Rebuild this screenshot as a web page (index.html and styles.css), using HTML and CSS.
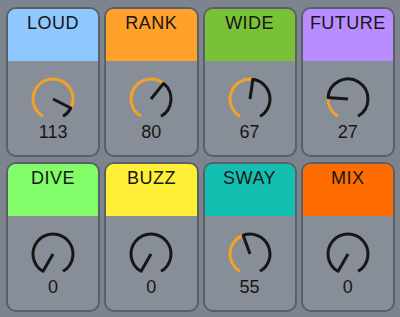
FILE: index.html
```html
<!DOCTYPE html>
<html>
<head>
<meta charset="utf-8">
<link rel="stylesheet" href="styles.css">
</head>
<body>
<div class="grid">
  <div class="card">
    <div class="head loud">LOUD</div>
    <div class="body">
      <svg class="knob" viewBox="0 0 46 46" width="46" height="46">
        <path class="on" d="M13 40.32 A20 20 0 1 1 40.84 32.05"/>
        <path class="off" d="M40.84 32.05 A20 20 0 0 1 33 40.32"/>
        <line class="ptr" x1="23" y1="23" x2="41.73" y2="32.5"/>
      </svg>
      <div class="val">113</div>
    </div>
  </div>
  <div class="card">
    <div class="head rank">RANK</div>
    <div class="body">
      <svg class="knob" viewBox="0 0 46 46" width="46" height="46">
        <path class="on" d="M13 40.32 A20 20 0 1 1 35.58 7.45"/>
        <path class="off" d="M35.58 7.45 A20 20 0 0 1 33 40.32"/>
        <line class="ptr" x1="23" y1="23" x2="36.21" y2="6.67"/>
      </svg>
      <div class="val">80</div>
    </div>
  </div>
  <div class="card">
    <div class="head wide">WIDE</div>
    <div class="body">
      <svg class="knob" viewBox="0 0 46 46" width="46" height="46">
        <path class="on" d="M13 40.32 A20 20 0 0 1 25.88 3.21"/>
        <path class="off" d="M25.88 3.21 A20 20 0 0 1 33 40.32"/>
        <line class="ptr" x1="23" y1="23" x2="26.02" y2="2.22"/>
      </svg>
      <div class="val">67</div>
    </div>
  </div>
  <div class="card">
    <div class="head future">FUTURE</div>
    <div class="body">
      <svg class="knob" viewBox="0 0 46 46" width="46" height="46">
        <path class="on" d="M13 40.32 A20 20 0 0 1 3.04 21.68"/>
        <path class="off" d="M3.04 21.68 A20 20 0 1 1 33 40.32"/>
        <line class="ptr" x1="23" y1="23" x2="2.05" y2="21.62"/>
      </svg>
      <div class="val">27</div>
    </div>
  </div>
  <div class="card">
    <div class="head dive">DIVE</div>
    <div class="body">
      <svg class="knob" viewBox="0 0 46 46" width="46" height="46">
        <path class="off" d="M13 40.32 A20 20 0 1 1 33 40.32"/>
        <line class="ptr" x1="23" y1="23" x2="12.5" y2="41.19"/>
      </svg>
      <div class="val">0</div>
    </div>
  </div>
  <div class="card">
    <div class="head buzz">BUZZ</div>
    <div class="body">
      <svg class="knob" viewBox="0 0 46 46" width="46" height="46">
        <path class="off" d="M13 40.32 A20 20 0 1 1 33 40.32"/>
        <line class="ptr" x1="23" y1="23" x2="12.5" y2="41.19"/>
      </svg>
      <div class="val">0</div>
    </div>
  </div>
  <div class="card">
    <div class="head sway">SWAY</div>
    <div class="body">
      <svg class="knob" viewBox="0 0 46 46" width="46" height="46">
        <path class="on" d="M13 40.32 A20 20 0 0 1 16.13 4.22"/>
        <path class="off" d="M16.13 4.22 A20 20 0 0 1 33 40.32"/>
        <line class="ptr" x1="23" y1="23" x2="15.79" y2="3.28"/>
      </svg>
      <div class="val">55</div>
    </div>
  </div>
  <div class="card">
    <div class="head mix">MIX</div>
    <div class="body">
      <svg class="knob" viewBox="0 0 46 46" width="46" height="46">
        <path class="off" d="M13 40.32 A20 20 0 1 1 33 40.32"/>
        <line class="ptr" x1="23" y1="23" x2="12.5" y2="41.19"/>
      </svg>
      <div class="val">0</div>
    </div>
  </div>
</div>
</body>
</html>
```
FILE: styles.css
```css
html, body {
  margin: 0;
  padding: 0;
}
body {
  background: #7e848d;
  font-family: "Liberation Sans", Arial, sans-serif;
  color: #161616;
}
.grid {
  display: grid;
  grid-template-columns: repeat(4, 1fr);
  grid-template-rows: 150px 150px;
  column-gap: 4px;
  row-gap: 5px;
  padding: 7px 5px 5px 6px;
}
.card {
  border: 2px solid #5a6069;
  border-radius: 10px;
  overflow: hidden;
  background: #888e97;
  display: flex;
  flex-direction: column;
}
.head {
  height: 52px;
  box-sizing: border-box;
  padding-top: 5px;
  text-align: center;
  font-size: 18px;
  line-height: 18px;
  letter-spacing: 0.5px;
  flex: none;
}
.loud { background: #8ec8ff; }
.rank { background: #ffa12b; }
.wide { background: #79c237; }
.future { background: #b98dff; }
.dive { background: #82fc69; }
.buzz { background: #ffef37; }
.sway { background: #13bfb1; }
.mix { background: #ff6d00; }
.body {
  display: flex;
  flex-direction: column;
  align-items: center;
}
.knob {
  display: block;
  margin-top: 15px;
}
.knob path {
  fill: none;
  stroke-width: 3;
}
.knob .on { stroke: #f2a227; }
.knob .off { stroke: #161616; }
.knob .ptr {
  stroke: #161616;
  stroke-width: 3;
}
.val {
  margin-top: 1px;
  font-size: 18px;
  line-height: 18px;
}
```
